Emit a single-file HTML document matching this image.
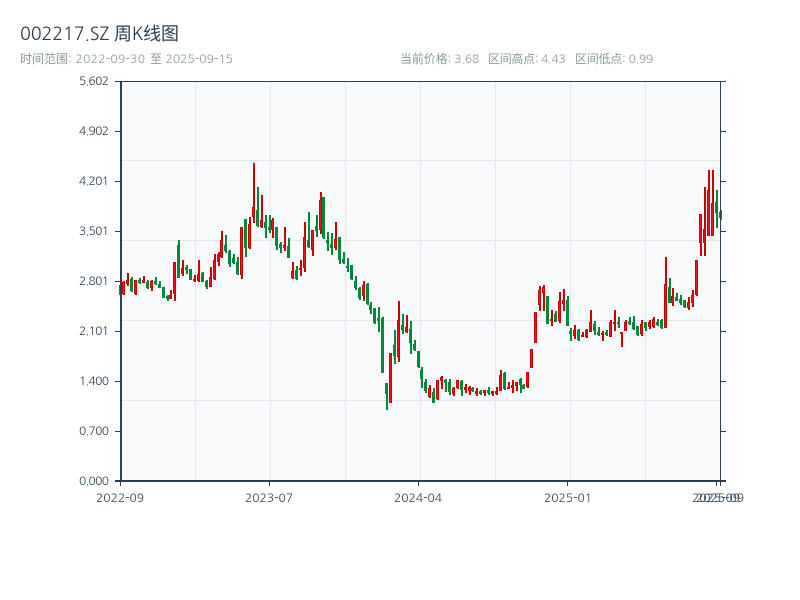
<!DOCTYPE html>
<html>
<head>
<meta charset="utf-8">
<style>
html,body{margin:0;padding:0;width:800px;height:600px;background:#fff;overflow:hidden}
svg{position:absolute;left:0;top:0;display:block}
text{font-family:"NanumGothic","WenQuanYi Zen Hei","Liberation Sans",sans-serif}
</style>
</head>
<body>
<svg id="c" width="800" height="600" viewBox="0 0 800 600" xmlns="http://www.w3.org/2000/svg">
<rect x="120" y="81" width="600" height="400" fill="#f8f9fa"/>
<g stroke="#e3e6ec" stroke-width="1" fill="none">
<path d="M120.5 160.5H720M120.5 240.5H720M120.5 320.5H720M120.5 400.5H720"/>
<path d="M195.5 81V481M270.5 81V481M345.5 81V481M420.5 81V481M495.5 81V481M570.5 81V481M645.5 81V481"/>
</g>
<g id="k" shape-rendering="crispEdges"></g>
<g stroke="#2c3e50" fill="none" shape-rendering="crispEdges">
<path d="M121 81V482" stroke-width="2"/>
<path d="M115 81.5H726" stroke-width="1"/>
<path d="M115 481H726" stroke-width="2"/>
<path d="M720.5 81V481" stroke-width="1"/>
<path d="M115 131.5H120M115 181.5H120M115 231.5H120M115 281.5H120M115 331.5H120M115 381.5H120M115 431.5H120"/>
<path d="M720 131.5H726M720 181.5H726M720 231.5H726M720 281.5H726M720 331.5H726M720 381.5H726M720 431.5H726"/>
<path d="M120.5 481V486M269.5 481V486M418.5 481V486M567.5 481V486M716.5 481V486M720.5 481V486"/>
</g>
<text x="20" y="40" font-size="18" fill="#2c3e50" textLength="159">002217.SZ 周K线图</text>
<g font-size="12" fill="#8a9a9c">
<text x="20" y="63">时间范围:</text>
<text x="75.5" y="63" textLength="69.5">2022-09-30</text>
<text x="150" y="63">至</text>
<text x="165.5" y="63" textLength="67.5">2025-09-15</text>
<text x="400" y="63" textLength="79.3">当前价格: 3.68</text>
<text x="488" y="63" textLength="77.7">区间高点: 4.43</text>
<text x="575" y="63" textLength="78.3">区间低点: 0.99</text>
</g>
<g font-size="12" fill="#2f4256" text-anchor="end">
<text x="109" y="85" textLength="30">5.602</text>
<text x="109" y="135" textLength="30">4.902</text>
<text x="109" y="185" textLength="30">4.201</text>
<text x="109" y="235" textLength="30">3.501</text>
<text x="109" y="285" textLength="30">2.801</text>
<text x="109" y="335" textLength="30">2.101</text>
<text x="109" y="385" textLength="30">1.400</text>
<text x="109" y="435" textLength="30">0.700</text>
<text x="109" y="485" textLength="30">0.000</text>
</g>
<g font-size="12" fill="#2f4256" text-anchor="middle">
<text x="120" y="502">2022-09</text>
<text x="269" y="502">2023-07</text>
<text x="418" y="502">2024-04</text>
<text x="568" y="502">2025-01</text>
<text x="716" y="502">2025-09</text>
<text x="720" y="502">2025-09</text>
</g>
</svg>
<script>
var segs=[
[150,"g405,405,435,435 r393,396,432,435 r369,391,402,408 g381,387,423,426 r390,390,432,435 g384,390,399,402 r378,391,399,399 g390,396,414,417 r390,393,414,423 g381,393,402,405 g393,402,414,414 g411,411,444,444 g435,438,447,453 r420,435,447,447 r336,336,432,453 g270,285,384,384 r330,354,372,378 g345,351,360,372 g357,357,390,390 r375,387,393,396 r330,372,393,396 g366,369,396,396 g390,393,411,417 r351,381,411,411 r312,330,387,390 r306,312,336,348 r243,270,321,324 g255,285,303,309"],
[150,"g300,303,342,350 g312,324,339,342 g321,336,372,375 r231,231,375,387 g207,207,294,321 r201,222,294,297 r39,171,201,219 g111,180,228,231 r135,210,231,234 g195,216,234,264 g195,231,240,249 r204,210,240,264 g231,231,288,300 g276,282,294,309 r231,285,294,303 g264,288,324,324 r336,363,384,387 g348,360,387,390 r330,354,357,378 r216,261,354,366 g186,270,291,294 r240,240,300,318 g195,228,243,261 r126,150,240,252 g141,141,264,267 g246,270,279,303 g249,282,294,315 r216,267,294,300 g261,261,330,342 g306,327,339,342 g324,348,354,366"],
[260,"g15,15,57,60 g48,63,84,90 g81,84,114,120 r63,75,108,123 g69,72,132,135 g126,135,150,162 g144,144,189,192 g141,174,183,216 g171,174,339,339 g369,369,402,450 r279,279,429,429 g210,255,288,312 r123,180,291,306 g162,195,210,222 r165,201,216,219 g183,207,249,282 g240,252,270,273 g273,273,321,324 g321,330,357,384 g357,366,393,399 r375,384,411,414 g384,396,429,429 r360,360,417,420 r348,351,363,387 g357,360,369,396 g357,366,396,405 r381,384,402,408 r360,360,384,387"],
[270,"g330,333,360,378 r342,351,360,369 r348,351,363,375 g351,354,363,366 r354,363,372,378 g360,363,372,375 r360,360,369,378 g351,360,369,375 r363,363,372,378 r351,363,372,375 r300,315,363,363 g306,309,357,360 r336,351,357,357 r330,345,354,369 r336,336,348,363 g324,327,345,369 g342,345,357,357 r306,306,351,354 r237,237,294,294 r126,126,219,219 r48,60,105,123 r45,51,69,123 g78,78,162,162 r120,147,153,168 g123,132,156,156 r66,93,153,159 r57,90,102,123 g78,90,168,168"],
[250,"g234,243,252,273 r225,240,258,267 g237,240,270,273 r246,255,261,261 r237,240,261,264 r180,216,246,246 g213,222,243,255 g231,246,255,258 r243,249,255,273 g240,246,255,258 r210,216,261,261 r180,216,222,243 g201,216,222,234 r246,246,249,291 r210,216,243,243 g201,213,222,225 g198,216,237,240 g228,228,255,258 r210,222,252,258 g216,216,234,243 r210,216,231,237 r201,207,231,234 g207,216,225,228 g207,210,234,237 r21,102,234,234 g84,111,159,160"],
[160,"r384,408,429,438 g399,411,423,423 g405,417,429,435 g420,420,441,444 r411,426,444,450 r390,405,429,441 r300,300,405,408 r162,162,249,288 r81,207,249,288 r30,90,228,228 r30,129,228,228 g90,126,159,204 g150,156,174,180"]
];
var NS="http://www.w3.org/2000/svg",g=document.getElementById("k"),i=0,step=600/153;
function el(t,a){var e=document.createElementNS(NS,t);for(var k in a)e.setAttribute(k,a[k]);g.appendChild(e)}
function rect(x,y,w,h,f){if(h>0)el("rect",{x:x,y:y,width:w,height:h,fill:f})}
segs.forEach(function(s){var oy=s[0];s[1].split(" ").forEach(function(c){
  var col=c[0],v=c.slice(1).split(",").map(function(n){return Math.round(oy+(+n)/3)});
  var x=120+i*step,L=Math.round(x-1.5);
  var bc=col=="r"?"#cc0000":"#00883a",fc=col=="r"?"#f01020":"#00883a";
  rect(L+1,v[0],2,v[3]-v[0],bc);
  var h=Math.max(v[2]-v[1],2);
  rect(L,v[1],3,h,bc);
  if(col=="r"&&h>2)rect(L+1,v[1]+1,1,h-2,fc);
  i++;
})});
</script>
</body>
</html>
